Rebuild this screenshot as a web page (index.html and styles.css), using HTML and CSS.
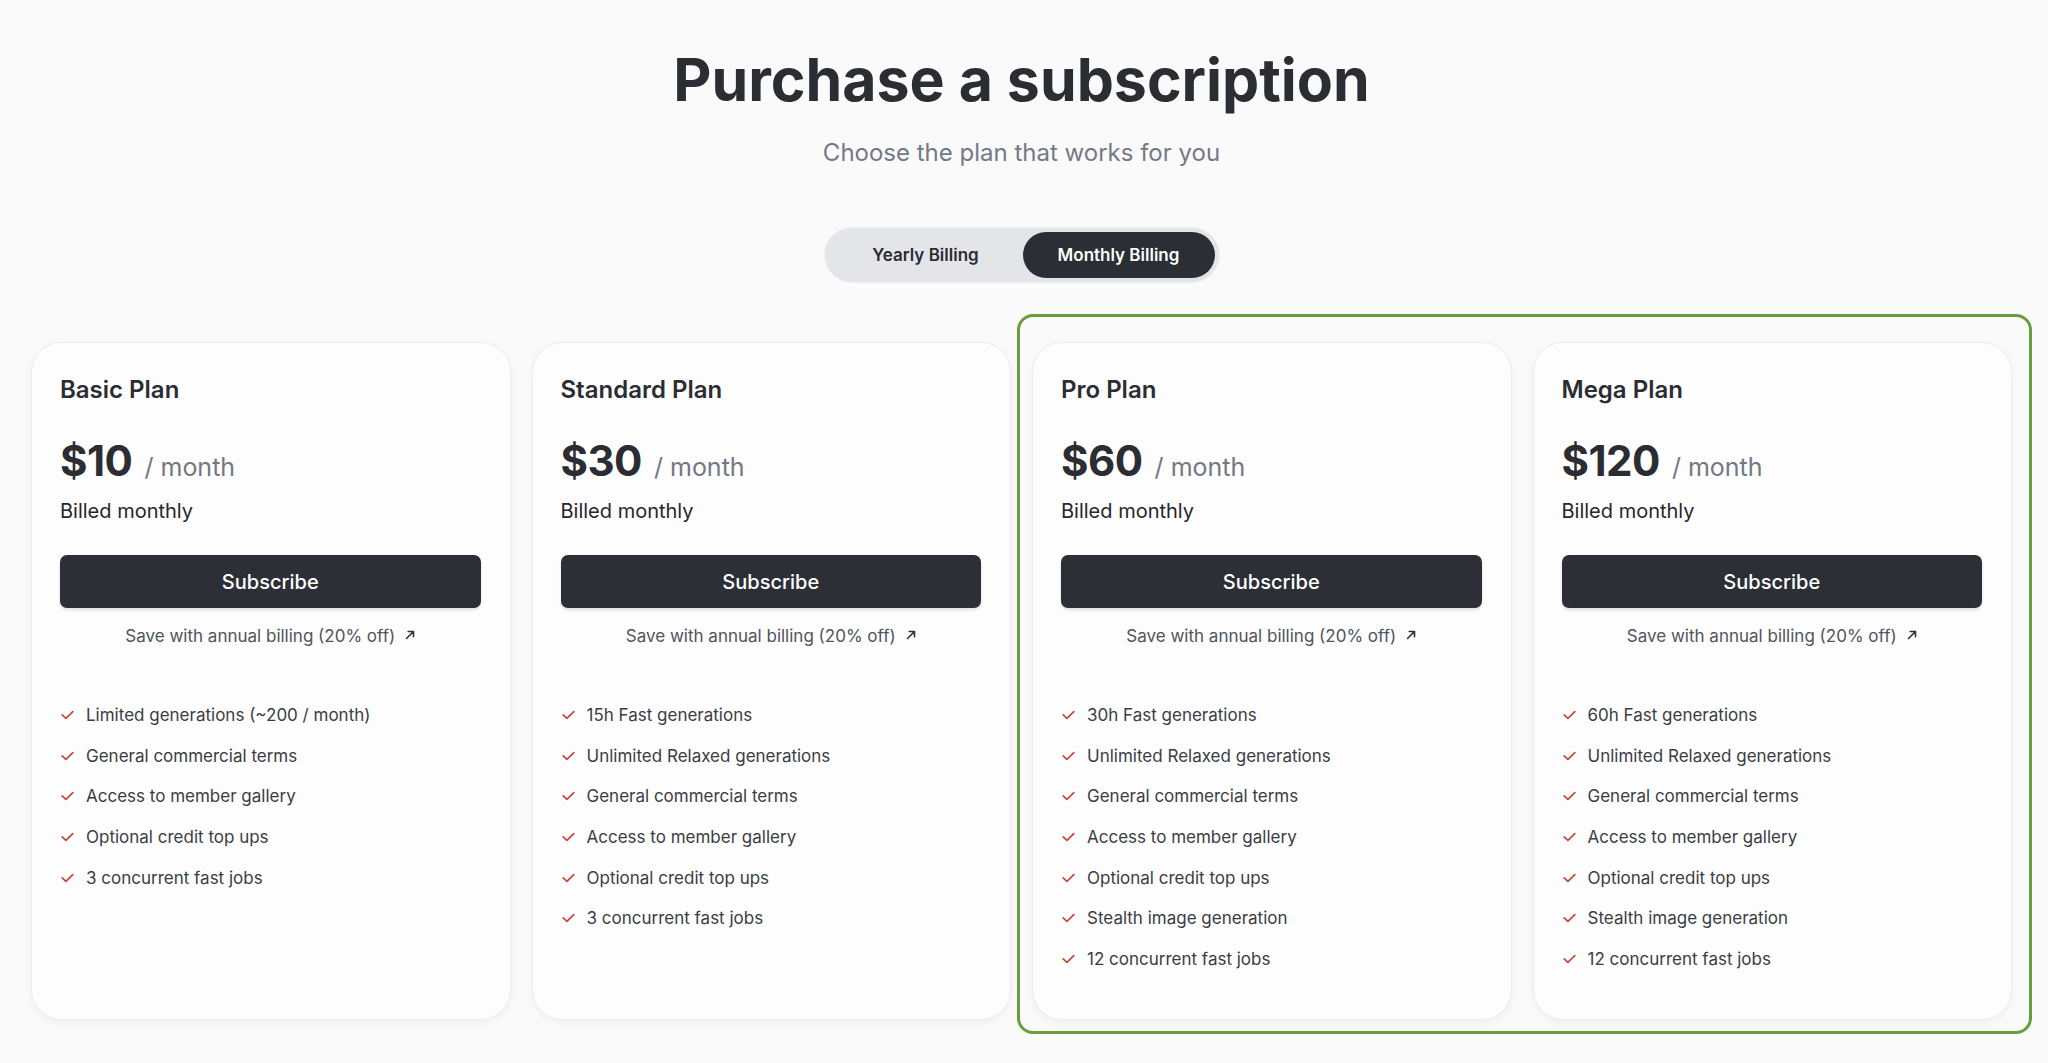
FILE: index.html
```html
<!DOCTYPE html>
<html lang="en">
<head>
<meta charset="utf-8">
<title>Purchase a subscription</title>
<link rel="stylesheet" href="styles.css">
</head>
<body>
<main class="page">
  <header class="hero">
    <h1 class="hero-title">Purchase a subscription</h1>
    <p class="hero-sub">Choose the plan that works for you</p>
    <div class="toggle">
      <button class="toggle-btn toggle-yearly">Yearly Billing</button>
      <button class="toggle-btn toggle-monthly is-active">Monthly Billing</button>
    </div>
  </header>

  <section class="plans">
    <article class="card">
      <h2 class="card-title">Basic Plan</h2>
      <div class="price-row"><span class="price">$10</span><span class="per">/ month</span></div>
      <p class="billed">Billed monthly</p>
      <button class="subscribe">Subscribe</button>
      <a class="save">Save with annual billing (20% off)<svg class="arrow" width="10" height="10" viewBox="0 0 10 10"><path d="M1.5 8.5L8.5 1.5M3.2 1.5H8.5V6.8" fill="none" stroke="#2f3238" stroke-width="1.6" stroke-linecap="round" stroke-linejoin="round"/></svg></a>
      <ul class="features">
        <li><svg class="check" width="13" height="10" viewBox="0 0 13 10"><path d="M1.2 4.9L4.9 8.4L11.8 1.6" fill="none" stroke="#c1493b" stroke-width="1.7" stroke-linecap="round" stroke-linejoin="round"/></svg>Limited generations (~200 / month)</li>
        <li><svg class="check" width="13" height="10" viewBox="0 0 13 10"><path d="M1.2 4.9L4.9 8.4L11.8 1.6" fill="none" stroke="#c1493b" stroke-width="1.7" stroke-linecap="round" stroke-linejoin="round"/></svg>General commercial terms</li>
        <li><svg class="check" width="13" height="10" viewBox="0 0 13 10"><path d="M1.2 4.9L4.9 8.4L11.8 1.6" fill="none" stroke="#c1493b" stroke-width="1.7" stroke-linecap="round" stroke-linejoin="round"/></svg>Access to member gallery</li>
        <li><svg class="check" width="13" height="10" viewBox="0 0 13 10"><path d="M1.2 4.9L4.9 8.4L11.8 1.6" fill="none" stroke="#c1493b" stroke-width="1.7" stroke-linecap="round" stroke-linejoin="round"/></svg>Optional credit top ups</li>
        <li><svg class="check" width="13" height="10" viewBox="0 0 13 10"><path d="M1.2 4.9L4.9 8.4L11.8 1.6" fill="none" stroke="#c1493b" stroke-width="1.7" stroke-linecap="round" stroke-linejoin="round"/></svg>3 concurrent fast jobs</li>
      </ul>
    </article>

    <article class="card">
      <h2 class="card-title">Standard Plan</h2>
      <div class="price-row"><span class="price">$30</span><span class="per">/ month</span></div>
      <p class="billed">Billed monthly</p>
      <button class="subscribe">Subscribe</button>
      <a class="save">Save with annual billing (20% off)<svg class="arrow" width="10" height="10" viewBox="0 0 10 10"><path d="M1.5 8.5L8.5 1.5M3.2 1.5H8.5V6.8" fill="none" stroke="#2f3238" stroke-width="1.6" stroke-linecap="round" stroke-linejoin="round"/></svg></a>
      <ul class="features">
        <li><svg class="check" width="13" height="10" viewBox="0 0 13 10"><path d="M1.2 4.9L4.9 8.4L11.8 1.6" fill="none" stroke="#c1493b" stroke-width="1.7" stroke-linecap="round" stroke-linejoin="round"/></svg>15h Fast generations</li>
        <li><svg class="check" width="13" height="10" viewBox="0 0 13 10"><path d="M1.2 4.9L4.9 8.4L11.8 1.6" fill="none" stroke="#c1493b" stroke-width="1.7" stroke-linecap="round" stroke-linejoin="round"/></svg>Unlimited Relaxed generations</li>
        <li><svg class="check" width="13" height="10" viewBox="0 0 13 10"><path d="M1.2 4.9L4.9 8.4L11.8 1.6" fill="none" stroke="#c1493b" stroke-width="1.7" stroke-linecap="round" stroke-linejoin="round"/></svg>General commercial terms</li>
        <li><svg class="check" width="13" height="10" viewBox="0 0 13 10"><path d="M1.2 4.9L4.9 8.4L11.8 1.6" fill="none" stroke="#c1493b" stroke-width="1.7" stroke-linecap="round" stroke-linejoin="round"/></svg>Access to member gallery</li>
        <li><svg class="check" width="13" height="10" viewBox="0 0 13 10"><path d="M1.2 4.9L4.9 8.4L11.8 1.6" fill="none" stroke="#c1493b" stroke-width="1.7" stroke-linecap="round" stroke-linejoin="round"/></svg>Optional credit top ups</li>
        <li><svg class="check" width="13" height="10" viewBox="0 0 13 10"><path d="M1.2 4.9L4.9 8.4L11.8 1.6" fill="none" stroke="#c1493b" stroke-width="1.7" stroke-linecap="round" stroke-linejoin="round"/></svg>3 concurrent fast jobs</li>
      </ul>
    </article>

    <article class="card">
      <h2 class="card-title">Pro Plan</h2>
      <div class="price-row"><span class="price">$60</span><span class="per">/ month</span></div>
      <p class="billed">Billed monthly</p>
      <button class="subscribe">Subscribe</button>
      <a class="save">Save with annual billing (20% off)<svg class="arrow" width="10" height="10" viewBox="0 0 10 10"><path d="M1.5 8.5L8.5 1.5M3.2 1.5H8.5V6.8" fill="none" stroke="#2f3238" stroke-width="1.6" stroke-linecap="round" stroke-linejoin="round"/></svg></a>
      <ul class="features">
        <li><svg class="check" width="13" height="10" viewBox="0 0 13 10"><path d="M1.2 4.9L4.9 8.4L11.8 1.6" fill="none" stroke="#c1493b" stroke-width="1.7" stroke-linecap="round" stroke-linejoin="round"/></svg>30h Fast generations</li>
        <li><svg class="check" width="13" height="10" viewBox="0 0 13 10"><path d="M1.2 4.9L4.9 8.4L11.8 1.6" fill="none" stroke="#c1493b" stroke-width="1.7" stroke-linecap="round" stroke-linejoin="round"/></svg>Unlimited Relaxed generations</li>
        <li><svg class="check" width="13" height="10" viewBox="0 0 13 10"><path d="M1.2 4.9L4.9 8.4L11.8 1.6" fill="none" stroke="#c1493b" stroke-width="1.7" stroke-linecap="round" stroke-linejoin="round"/></svg>General commercial terms</li>
        <li><svg class="check" width="13" height="10" viewBox="0 0 13 10"><path d="M1.2 4.9L4.9 8.4L11.8 1.6" fill="none" stroke="#c1493b" stroke-width="1.7" stroke-linecap="round" stroke-linejoin="round"/></svg>Access to member gallery</li>
        <li><svg class="check" width="13" height="10" viewBox="0 0 13 10"><path d="M1.2 4.9L4.9 8.4L11.8 1.6" fill="none" stroke="#c1493b" stroke-width="1.7" stroke-linecap="round" stroke-linejoin="round"/></svg>Optional credit top ups</li>
        <li><svg class="check" width="13" height="10" viewBox="0 0 13 10"><path d="M1.2 4.9L4.9 8.4L11.8 1.6" fill="none" stroke="#c1493b" stroke-width="1.7" stroke-linecap="round" stroke-linejoin="round"/></svg>Stealth image generation</li>
        <li><svg class="check" width="13" height="10" viewBox="0 0 13 10"><path d="M1.2 4.9L4.9 8.4L11.8 1.6" fill="none" stroke="#c1493b" stroke-width="1.7" stroke-linecap="round" stroke-linejoin="round"/></svg>12 concurrent fast jobs</li>
      </ul>
    </article>

    <article class="card">
      <h2 class="card-title">Mega Plan</h2>
      <div class="price-row"><span class="price">$120</span><span class="per">/ month</span></div>
      <p class="billed">Billed monthly</p>
      <button class="subscribe">Subscribe</button>
      <a class="save">Save with annual billing (20% off)<svg class="arrow" width="10" height="10" viewBox="0 0 10 10"><path d="M1.5 8.5L8.5 1.5M3.2 1.5H8.5V6.8" fill="none" stroke="#2f3238" stroke-width="1.6" stroke-linecap="round" stroke-linejoin="round"/></svg></a>
      <ul class="features">
        <li><svg class="check" width="13" height="10" viewBox="0 0 13 10"><path d="M1.2 4.9L4.9 8.4L11.8 1.6" fill="none" stroke="#c1493b" stroke-width="1.7" stroke-linecap="round" stroke-linejoin="round"/></svg>60h Fast generations</li>
        <li><svg class="check" width="13" height="10" viewBox="0 0 13 10"><path d="M1.2 4.9L4.9 8.4L11.8 1.6" fill="none" stroke="#c1493b" stroke-width="1.7" stroke-linecap="round" stroke-linejoin="round"/></svg>Unlimited Relaxed generations</li>
        <li><svg class="check" width="13" height="10" viewBox="0 0 13 10"><path d="M1.2 4.9L4.9 8.4L11.8 1.6" fill="none" stroke="#c1493b" stroke-width="1.7" stroke-linecap="round" stroke-linejoin="round"/></svg>General commercial terms</li>
        <li><svg class="check" width="13" height="10" viewBox="0 0 13 10"><path d="M1.2 4.9L4.9 8.4L11.8 1.6" fill="none" stroke="#c1493b" stroke-width="1.7" stroke-linecap="round" stroke-linejoin="round"/></svg>Access to member gallery</li>
        <li><svg class="check" width="13" height="10" viewBox="0 0 13 10"><path d="M1.2 4.9L4.9 8.4L11.8 1.6" fill="none" stroke="#c1493b" stroke-width="1.7" stroke-linecap="round" stroke-linejoin="round"/></svg>Optional credit top ups</li>
        <li><svg class="check" width="13" height="10" viewBox="0 0 13 10"><path d="M1.2 4.9L4.9 8.4L11.8 1.6" fill="none" stroke="#c1493b" stroke-width="1.7" stroke-linecap="round" stroke-linejoin="round"/></svg>Stealth image generation</li>
        <li><svg class="check" width="13" height="10" viewBox="0 0 13 10"><path d="M1.2 4.9L4.9 8.4L11.8 1.6" fill="none" stroke="#c1493b" stroke-width="1.7" stroke-linecap="round" stroke-linejoin="round"/></svg>12 concurrent fast jobs</li>
      </ul>
    </article>

    <div class="highlight" aria-hidden="true"></div>
  </section>
</main>
</body>
</html>
```

FILE: styles.css
```css
* {
  box-sizing: border-box;
}

html, body {
  margin: 0;
  padding: 0;
  background: #fafafa;
}

body {
  font-family: Inter, "Liberation Sans", sans-serif;
  color: #2b2d33;
  width: 2048px;
  height: 1063px;
  overflow: hidden;
}

.page {
  padding: 44px 36px 0 31px;
}

.hero {
  display: flex;
  flex-direction: column;
  align-items: center;
}

.hero-title {
  margin: 0;
  font-size: 59px;
  line-height: 72px;
  font-weight: 700;
  letter-spacing: 0;
  color: #2b2d33;
}

.hero-sub {
  margin: 21px 0 0;
  font-size: 24px;
  line-height: 32px;
  font-weight: 400;
  color: #747985;
}

.toggle {
  margin-top: 59px;
  display: flex;
  padding: 4px;
  height: 54px;
  border-radius: 27px;
  background: #e4e5e9;
  box-shadow: 0 0 0 1px #eeeff2;
}

.toggle-btn {
  border: 0;
  height: 46px;
  border-radius: 23px;
  background: transparent;
  font-family: inherit;
  font-size: 17px;
  font-weight: 600;
  color: #2b2d33;
  padding: 0;
}

.toggle-yearly {
  width: 194px;
}

.toggle-monthly {
  width: 192px;
}

.toggle-btn.is-active {
  background: #2b2e35;
  color: #ffffff;
}

.plans {
  position: relative;
  margin-top: 60px;
  display: grid;
  grid-template-columns: repeat(4, 1fr);
  column-gap: 21px;
}

.card {
  display: flex;
  flex-direction: column;
  padding: 31px 29px 48px 28px;
  background: #fdfdfd;
  border: 1px solid #ececec;
  border-radius: 30px;
  box-shadow: 0 3px 8px rgba(0, 0, 0, 0.045);
}

.card-title {
  margin: 0;
  font-size: 24px;
  line-height: 32px;
  font-weight: 600;
  color: #2b2d33;
}

.price-row {
  margin-top: 29px;
  display: flex;
  align-items: baseline;
  gap: 12px;
  line-height: 52px;
}

.price {
  font-size: 42px;
  font-weight: 700;
  letter-spacing: -0.5px;
  color: #2b2d33;
}

.per {
  font-size: 25px;
  font-weight: 400;
  color: #737884;
}

.billed {
  margin: 4px 0 0;
  font-size: 20px;
  line-height: 28px;
  color: #25272c;
}

.subscribe {
  margin-top: 30px;
  height: 53px;
  border: 0;
  border-radius: 7px;
  background: #2c2f36;
  color: #ffffff;
  font-family: inherit;
  font-size: 20px;
  font-weight: 500;
  box-shadow: 0 2px 3px rgba(0, 0, 0, 0.12);
}

.save {
  margin-top: 16px;
  display: flex;
  justify-content: center;
  align-items: center;
  gap: 10px;
  font-size: 17px;
  line-height: 24px;
  color: #50545c;
}

.arrow {
  display: block;
  flex: none;
  margin-top: -2px;
}

.features {
  list-style: none;
  margin: 55px 0 0;
  padding: 0 0 0 1px;
  display: flex;
  flex-direction: column;
  gap: 16.7px;
}

.features li {
  display: flex;
  align-items: center;
  gap: 12px;
  font-size: 17px;
  line-height: 24px;
  color: #3a3d44;
}

.check {
  display: block;
  flex: none;
}

.highlight {
  position: absolute;
  left: 986px;
  top: -28px;
  width: 1015px;
  height: 720px;
  border: 3px solid #6a9c3e;
  border-radius: 16px;
  pointer-events: none;
}
```
